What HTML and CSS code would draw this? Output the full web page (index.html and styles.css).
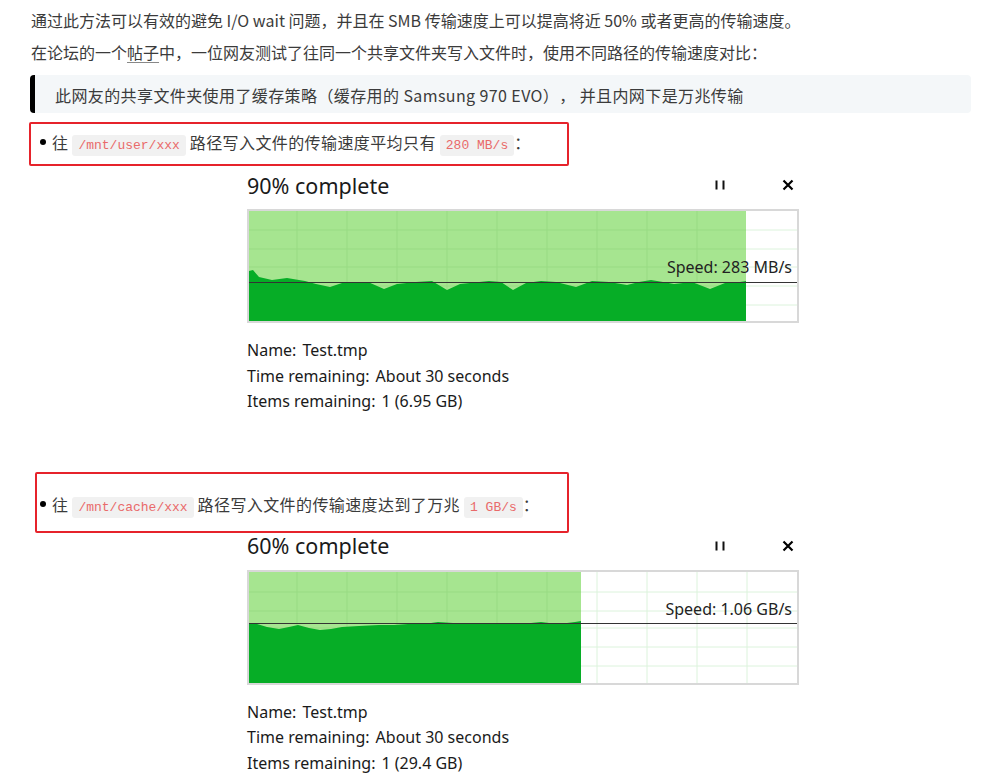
FILE: index.html
```html
<!DOCTYPE html>
<html lang="zh-CN">
    <head>
        <meta charset="utf-8" />
        <title>SMB 传输速度</title>
        <link rel="stylesheet" href="styles.css">
    </head>

    <body>
        <article class="post">
            <p>通过此方法可以有效的避免 I/O wait 问题，并且在 SMB 传输速度上可以提高将近 50% 或者更高的传输速度。</p>
            <p>在论坛的一个<a href="#">帖子</a>中，一位网友测试了往同一个共享文件夹写入文件时，使用不同路径的传输速度对比：</p>
            <blockquote>
                <p>此网友的共享文件夹使用了缓存策略（缓存用的 Samsung 970 EVO）， 并且内网下是万兆传输</p>
            </blockquote>

            <ul class="tests">
                <li class="test first">
                    <span class="callout"></span>
                    <div class="line">往 <code>/mnt/user/xxx</code> 路径写入文件的传输速度平均只有 <code>280 MB/s</code>：</div>

                    <figure class="copy">
                        <div class="copy-head">
                            <span class="copy-title">90% complete</span>
                            <span class="copy-ctrl">
                                <svg class="pause" width="12" height="12" viewBox="0 0 12 12"><rect x="1.5" y="1.5" width="2" height="9"/><rect x="8.5" y="1.5" width="2" height="9"/></svg>
                                <svg class="close" width="12" height="12" viewBox="0 0 12 12"><path d="M1.5 1.5 L10.5 10.5 M10.5 1.5 L1.5 10.5"/></svg>
                            </span>
                        </div>
                        <svg class="graph" width="548" height="110" viewBox="0 0 548 110">
                            <rect class="done" x="0" y="0" width="497" height="110"/>
                            <g class="grid-done">
                                <path d="M48 0V110M98 0V110M148 0V110M198 0V110M248 0V110M298 0V110M348 0V110M398 0V110M448 0V110"/>
                                <path d="M0 19H497M0 38H497M0 56H497M0 75H497M0 94H497"/>
                            </g>
                            <g class="grid-left">
                                <path d="M497 19H548M497 38H548M497 56H548M497 75H548M497 94H548"/>
                            </g>
                            <polygon class="rate" points="0,60 4,59 10,66 23,69 38,67 56,70 67,73 81,76 93,72 119,71 135,78 148,73 167,71 183,70 198,79 211,73 240,70 252,71 264,79 277,72 292,70 307,71 327,76 343,70 360,71 378,74 390,71 402,69 414,71 425,73 443,71 461,78 476,72 491,71 497,70 497,110 0,110"/>
                            <line class="avg" x1="0" y1="71.5" x2="548" y2="71.5"/>
                            <text class="speed" x="543" y="62">Speed: 283 MB/s</text>
                        </svg>
                        <dl class="copy-info">
                            <div><dt>Name:</dt><dd>Test.tmp</dd></div>
                            <div><dt>Time remaining:</dt><dd>About 30 seconds</dd></div>
                            <div><dt>Items remaining:</dt><dd>1 (6.95 GB)</dd></div>
                        </dl>
                    </figure>
                </li>

                <li class="test second">
                    <span class="callout"></span>
                    <div class="line">往 <code>/mnt/cache/xxx</code> 路径写入文件的传输速度达到了万兆 <code>1 GB/s</code>：</div>

                    <figure class="copy">
                        <div class="copy-head">
                            <span class="copy-title">60% complete</span>
                            <span class="copy-ctrl">
                                <svg class="pause" width="12" height="12" viewBox="0 0 12 12"><rect x="1.5" y="1.5" width="2" height="9"/><rect x="8.5" y="1.5" width="2" height="9"/></svg>
                                <svg class="close" width="12" height="12" viewBox="0 0 12 12"><path d="M1.5 1.5 L10.5 10.5 M10.5 1.5 L1.5 10.5"/></svg>
                            </span>
                        </div>
                        <svg class="graph" width="548" height="111" viewBox="0 0 548 111">
                            <rect class="done" x="0" y="0" width="332" height="111"/>
                            <g class="grid-done">
                                <path d="M48 0V111M98 0V111M148 0V111M198 0V111M248 0V111M298 0V111"/>
                                <path d="M0 20H332M0 39H332M0 56H332M0 75H332M0 94H332"/>
                            </g>
                            <g class="grid-left">
                                <path d="M348 0V111M398 0V111M448 0V111M498 0V111"/>
                                <path d="M332 20H548M332 39H548M332 56H548M332 75H548M332 94H548"/>
                            </g>
                            <polygon class="rate" points="0,51 8,52 18,55 30,57 40,55 49,53 60,56 71,58 82,57 93,55 110,54 130,53 145,53 159,52 175,52 189,50 204,51 218,52 230,52 240,51 255,52 270,52 282,51 292,50 300,51 307,52 318,51 326,50 332,49 332,111 0,111"/>
                            <line class="avg" x1="0" y1="51.5" x2="548" y2="51.5"/>
                            <text class="speed" x="543" y="43">Speed: 1.06 GB/s</text>
                        </svg>
                        <dl class="copy-info">
                            <div><dt>Name:</dt><dd>Test.tmp</dd></div>
                            <div><dt>Time remaining:</dt><dd>About 30 seconds</dd></div>
                            <div><dt>Items remaining:</dt><dd>1 (29.4 GB)</dd></div>
                        </dl>
                    </figure>
                </li>
            </ul>
        </article>
    </body>
</html>
```

FILE: styles.css
```css
html, body {
    margin: 0;
    padding: 0;
    background: #fff;
}
body {
    font-family: "Noto Sans CJK SC", "Noto Sans", sans-serif;
    font-size: 16px;
    color: #3b3b3b;
    text-spacing-trim: space-all;
}
.post {
    width: 940px;
    padding: 8px 0 0 31px;
}
.post p {
    margin: 0 0 8px;
    line-height: 24px;
}
.post a {
    color: inherit;
    text-decoration: underline;
    text-decoration-color: #888;
    text-underline-offset: 3px;
}
blockquote {
    margin: 11px 0 0 -1px;
    padding: 8px 20px 6px;
    background: #f4f7f9;
    border-left: 5px solid #000;
    border-radius: 4px;
    letter-spacing: 0.4px;
}
blockquote p {
    margin: 0 !important;
}
code {
    font-family: "Liberation Mono", monospace;
    font-size: 13px;
    letter-spacing: 0;
    color: #e96a6a;
    background: #f1f1f1;
    padding: 3px 6px;
    border-radius: 3px;
}
.tests {
    list-style: none;
    margin: 0;
    padding: 0 0 0 21px;
}
.test {
    position: relative;
}
.test .line {
    position: relative;
    line-height: 24px;
    letter-spacing: 0.4px;
}
.test .line::before {
    content: "";
    position: absolute;
    left: -12px;
    top: 9px;
    width: 6px;
    height: 6px;
    border-radius: 50%;
    background: #000;
}
.first {
    margin-top: 17px;
}
.second {
    margin-top: 77px;
}
/* red frames drawn over the list lines */
.callout {
    position: absolute;
    border: 2px solid #e6232b;
    border-radius: 2px;
    pointer-events: none;
}
.first .callout {
    left: -23px;
    top: -8px;
    width: 536px;
    height: 40px;
}
.second .callout {
    left: -17px;
    top: -20px;
    width: 530px;
    height: 57px;
}

/* copy dialog */
.copy {
    margin: 13px 0 0 195px;
    width: 552px;
    font-family: "Noto Sans", sans-serif;
    color: #1a1a1a;
}
.second .copy {
    margin-top: 12px;
}
.copy-head {
    display: flex;
    align-items: center;
    justify-content: space-between;
    height: 28px;
    margin-bottom: 10px;
}
.copy-title {
    font-size: 21.5px;
}
.copy-ctrl {
    display: flex;
    align-items: center;
    gap: 56px;
    padding-right: 5px;
}
.pause rect {
    fill: #111;
}
.close path {
    stroke: #000;
    stroke-width: 2.2;
    fill: none;
}
.graph {
    display: block;
    border: 2px solid #d8d8d8;
}
.graph .done {
    fill: #a6e590;
}
.grid-done path {
    stroke: #98db83;
    stroke-width: 1;
    fill: none;
}
.grid-left path {
    stroke: #dcf3dc;
    stroke-width: 1;
    fill: none;
}
.graph .rate {
    fill: #06ad26;
}
.graph .avg {
    stroke: #333;
    stroke-width: 1;
}
.graph .speed {
    font-family: "Noto Sans", sans-serif;
    font-size: 16px;
    fill: #222;
    text-anchor: end;
}
.copy-info {
    margin: 15px 0 0;
    font-size: 16px;
    line-height: 25.5px;
}
.copy-info div {
    display: flex;
    gap: 6px;
}
.copy-info dt,
.copy-info dd {
    margin: 0;
}
```
